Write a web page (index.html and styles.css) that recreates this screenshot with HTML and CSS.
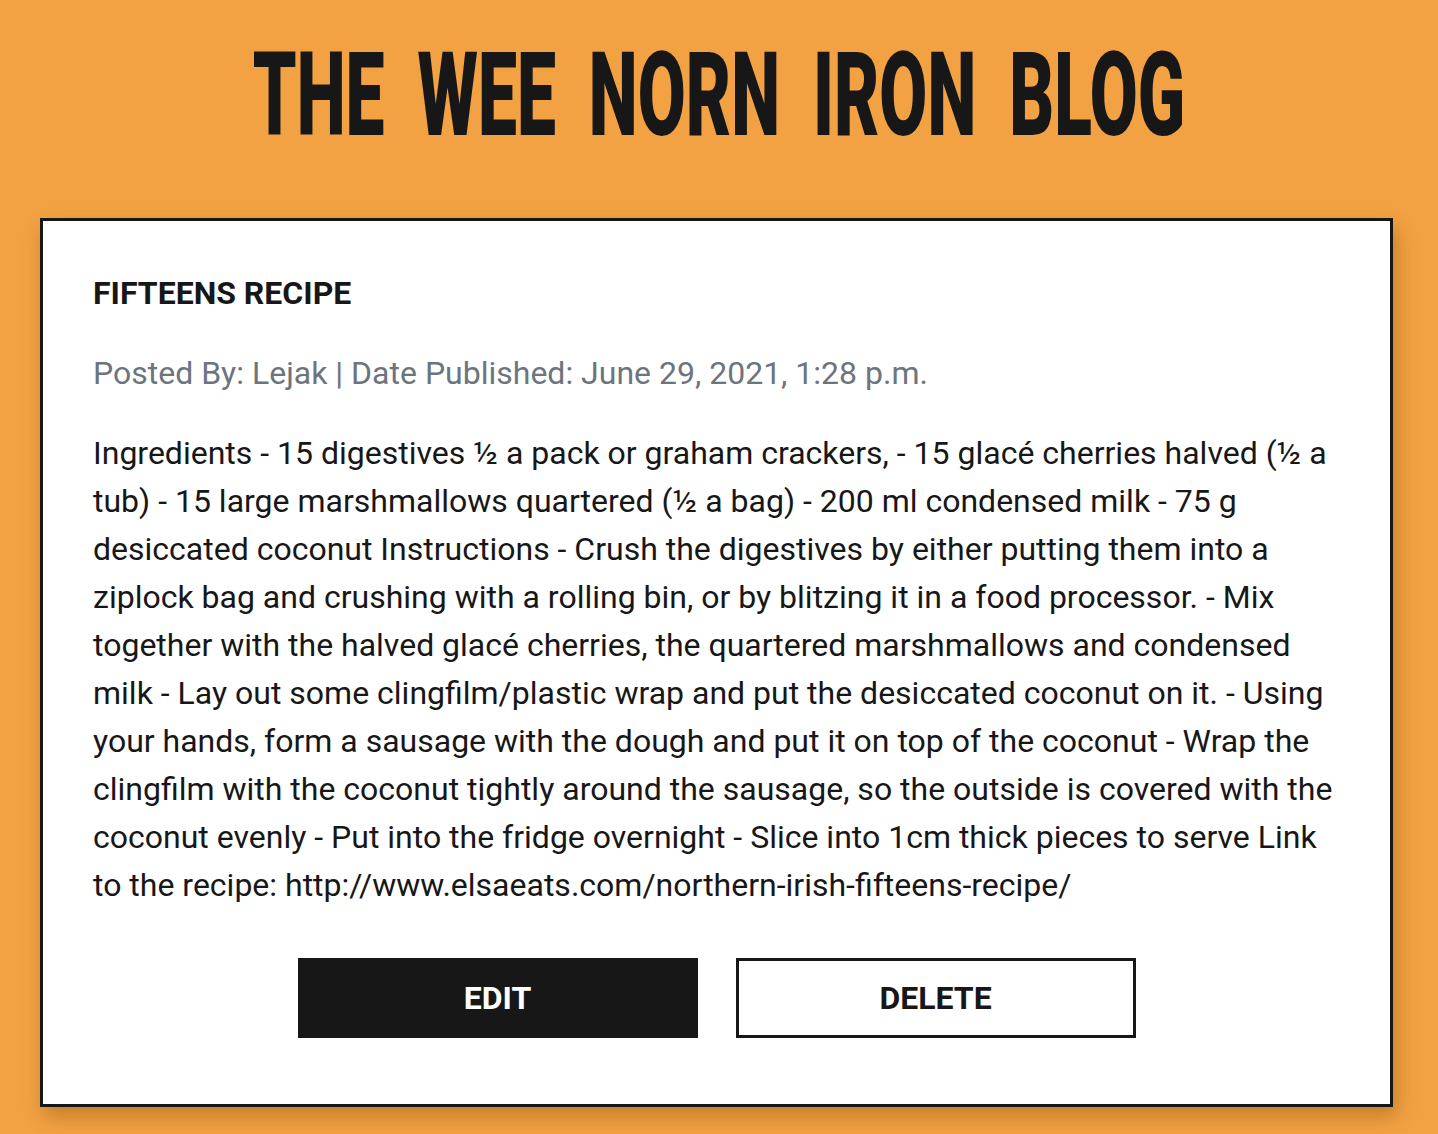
FILE: index.html
```html
<!DOCTYPE html>
<html>
<head>
<meta charset="utf-8">
<link rel="stylesheet" href="styles.css">
</head>
<body>
<header class="site-header">
  <h1 class="site-title"><span class="site-title-text">THE WEE NORN IRON BLOG</span></h1>
</header>
<main class="content">
  <article class="post-card">
    <h2 class="post-title">FIFTEENS RECIPE</h2>
    <p class="post-meta">Posted By: Lejak | Date Published: June 29, 2021, 1:28 p.m.</p>
    <p class="post-body">Ingredients - 15 digestives ½ a pack or graham crackers, - 15 glacé cherries halved (½ a tub) - 15 large marshmallows quartered (½ a bag) - 200 ml condensed milk - 75 g desiccated coconut Instructions - Crush the digestives by either putting them into a ziplock bag and crushing with a rolling bin, or by blitzing it in a food processor. - Mix together with the halved glacé cherries, the quartered marshmallows and condensed milk - Lay out some clingfilm/plastic wrap and put the desiccated coconut on it. - Using your hands, form a sausage with the dough and put it on top of the coconut - Wrap the clingfilm with the coconut tightly around the sausage, so the outside is covered with the coconut evenly - Put into the fridge overnight - Slice into 1cm thick pieces to serve Link to the recipe: http://www.elsaeats.com/northern-irish-fifteens-recipe/</p>
    <div class="post-actions">
      <a class="btn btn-dark" href="#">EDIT</a>
      <a class="btn btn-outline" href="#">DELETE</a>
    </div>
  </article>
</main>
</body>
</html>
```

FILE: styles.css
```css
* { box-sizing: border-box; }
html, body { margin: 0; padding: 0; }
body {
  background: #f2a242;
  font-family: Roboto, "Noto Sans", sans-serif;
  color: #171717;
  min-height: 1134px;
}
.site-header {
  display: flex;
  justify-content: center;
  padding-top: 40px;
  height: 218px;
}
.site-title {
  margin: 0;
  height: 110px;
  display: flex;
  justify-content: center;
  align-items: center;
  font-family: Roboto, sans-serif;
  font-weight: 900;
  font-size: 116px;
  line-height: 1;
  color: #171717;
}
.site-title-text {
  display: inline-block;
  transform: scaleX(0.6);
  word-spacing: 26px;
  white-space: nowrap;
}
.content {
  padding: 0 45px 0 40px;
}
.post-card {
  background: #fff;
  border: 3px solid #171717;
  box-shadow: 4px 10px 18px rgba(120, 60, 0, 0.35);
  padding: 48px 50px 66px 50px;
}
.post-title {
  margin: 0 0 32px;
  font-size: 32px;
  font-weight: 700;
  line-height: 48px;
}
.post-meta {
  margin: 0 0 32px;
  color: #6c757d;
  font-size: 32px;
  line-height: 48px;
}
.post-body {
  margin: 0;
  font-size: 32px;
  line-height: 48px;
  color: #171717;
}
.post-actions {
  display: flex;
  justify-content: center;
  gap: 38px;
  margin-top: 49px;
}
.btn {
  display: flex;
  align-items: center;
  justify-content: center;
  width: 400px;
  height: 80px;
  font-weight: 700;
  font-size: 32px;
  text-decoration: none;
}
.btn-dark {
  background: #171717;
  color: #fff;
}
.btn-outline {
  background: #fff;
  color: #171717;
  border: 3px solid #171717;
}
```
